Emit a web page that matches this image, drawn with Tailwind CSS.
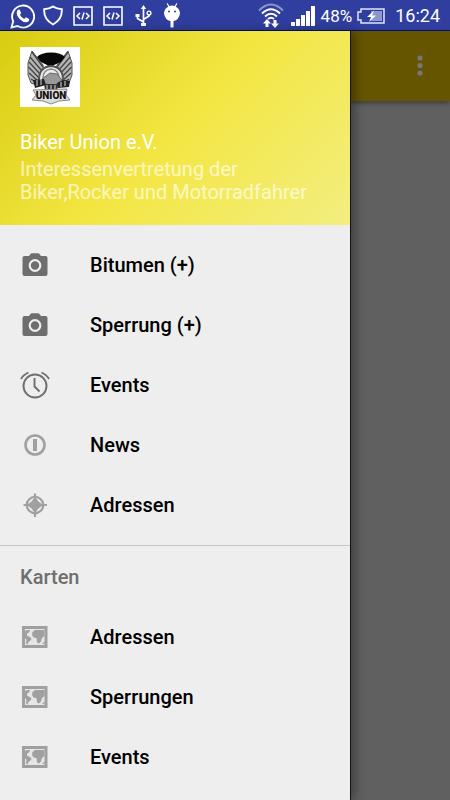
<!DOCTYPE html>
<html lang="de">
<head>
    <meta charset="UTF-8">
    <meta name="viewport" content="width=device-width, initial-scale=1.0">
    <title>Biker Union e.V.</title>
    <script src="https://cdn.jsdelivr.net/npm/@tailwindcss/browser@4"></script>
</head>
<body class="flex flex-col min-h-screen bg-[#606060] font-[Roboto,sans-serif]">
    <!-- Icons used more than once -->
    <svg class="hidden">
        <symbol id="code" viewBox="0 0 20 20">
            <path d="M1 1h18v18H1z" fill="none" stroke="#fff" stroke-width="1.6"/>
            <path d="M7 7l-3 3 3 3M13 7l3 3-3 3M11 6.500l-2 7" fill="none" stroke="#fff" stroke-width="1.500"/>
        </symbol>
        <symbol id="camera" viewBox="0 0 26 24">
            <path d="M2.500 3H7l1.500-2q.5-.7 1.300-.7h6.400q.8 0 1.300.7L19 3h4.500Q25.500 3 25.500 5v16q0 2-2 2h-21q-2 0-2-2V5q0-2 2-2z" fill="#6e6e6e"/>
            <circle cx="13" cy="12.500" r="5.300" fill="none" stroke="#eee" stroke-width="2.200"/>
        </symbol>
        <symbol id="map" viewBox="0 0 26 22">
            <path d="M1.500 1.500h22.500v19H1.500z" fill="#e6e6e6" stroke="#a0a0a0" stroke-width="3"/>
            <path d="M3 5q2-1.500 5-1l-1 2.500-2 1v2l3.500 2q1.500 1 .5 2.500L6.500 16 5.500 18.500 4 17.500 4.500 14 3 12z" fill="#a0a0a0"/>
            <path d="M10.500 6l2.500-2h9.500v6l-2.500 2-1 3.500-2 2-2-1-.5-4.500-3-.5-1.500-2.500zM20 17.500l2.500-2V18z" fill="#a0a0a0"/>
        </symbol>
    </svg>

    <!-- Status bar -->
    <header class="flex items-center justify-between h-[31px] pt-px pl-[10px] pr-[10px] bg-[#303f9f] border-b border-[#001070] text-white">
        <div class="flex items-center">
            <svg class="w-[25px] h-[26px]" viewBox="0 0 25 26">
                <path d="M1.500 24.500l1.700-6.200A11 11 0 1 1 7.500 23z" fill="none" stroke="#fff" stroke-width="1.900"/>
                <path d="M7.200 7.500q1.300-1.500 2.500-.8l1.400 3q0 1-1.200 2 1.500 3 4.300 4.200l1.600-1.700 3.400 1.700q.2 2.600-2.500 3.300-3 .6-6.800-3Q5.500 12 7.200 7.500z" fill="#fff"/>
            </svg>
            <svg class="w-[20px] h-[21px] ml-[8px]" viewBox="0 0 20 21">
                <path d="M10 1.500Q13.500 4 18.800 4.200 19.500 14.500 10 19.500.5 14.500 1.200 4.200 6.500 4 10 1.500z" fill="none" stroke="#fff" stroke-width="1.900"/>
            </svg>
            <svg class="size-[20px] ml-[10px]"><use href="#code"/></svg>
            <svg class="size-[20px] ml-[10px]"><use href="#code"/></svg>
            <svg class="w-[18px] h-[24px] ml-[11px]" viewBox="0 0 18 24" fill="none" stroke="#fff" stroke-width="1.700">
                <path d="M9.500 3v17M9.500 18l-6-3.500v-3M9.500 15.500l5.500-3.500V10"/>
                <circle cx="15" cy="9" r="1.900" stroke-width="1.400"/>
                <path d="M6.800 5l2.700-4 2.700 4zM1.500 10h4v3h-4zM7 19h5v3H7z" fill="#fff" stroke="none"/>
            </svg>
            <svg class="w-[18px] h-[25px] ml-[11px]" viewBox="0 0 18 25">
                <path d="M4.500 0l1.800 3q2.700-1 5.400 0l1.800-3 .8.500-1.500 3.200Q17 6 17 10.500 16 17 10.500 18v6.500h-3V18Q2 17 1 10.500 1 6 5.200 3.700L3.700.5z" fill="#fff"/>
                <circle cx="6" cy="8.500" r="1" fill="#303f9f"/><circle cx="12" cy="8.500" r="1" fill="#303f9f"/>
            </svg>
        </div>
        <div class="flex items-center">
            <svg class="w-[26px] h-[25px]" viewBox="0 0 26 25" fill="none" stroke="#fff" stroke-width="2">
                <path d="M1 7.500Q13-4.500 25 7.500" stroke-opacity=".45"/>
                <path d="M4 10.500q9-8.500 18 0M7 13.500q6-5.500 12 0M10 16q3-2.500 6 0"/>
                <path d="M9 16l4 4.500h-2.500V24h-3v-3.500H5zM17 25l4-4.500h-2.500V17h-3v3.500H13z" fill="#fff" stroke="none"/>
            </svg>
            <svg class="w-[24px] h-[20px] ml-[7px]" viewBox="0 0 24 20">
                <path d="M0 16h4v4H0zM5 13h4v7H5zM10 9h4v11h-4zM15 5h4v15h-4zM20 0h4v20h-4z" fill="#fff"/>
            </svg>
            <span class="ml-[6px] text-[17px] leading-6">48%</span>
            <svg class="w-[28px] h-[16px] ml-[5px]" viewBox="0 0 28 16">
                <path d="M4 1h23v14H4v-3H1V4h3z" fill="none" stroke="#dfe2f3" stroke-width="1.500"/>
                <path d="M14 3h11v10H14z" fill="#8d96cd"/>
                <path d="M17 2.500l-7 6.500h4l-2 5 7-6.500h-4z" fill="#fff"/>
            </svg>
            <time class="ml-[10px] text-[18px] leading-6">16:24</time>
        </div>
    </header>

    <div class="flex flex-1">
        <!-- Navigation drawer -->
        <aside class="w-[351px] shrink-0 bg-[#eee] border-r border-[#111] shadow-[4px_0_10px_rgba(0,0,0,0.35)] z-10">
            <div class="h-[194px] px-[20px] pt-[16px] text-[20px] leading-6 bg-linear-[135deg,#d8cc10,#f3e642_50%,#f3ee80]">
                <svg class="size-[60px]" viewBox="0 0 60 60" role="img" aria-label="Biker Union">
                    <path d="M0 0h60v60H0z" fill="#fff"/>
                    <!-- Wings -->
                    <path d="M12 4L8 16v12l3 8 8 3 5-8-1-13zM48 4l4 12v12l-3 8-8 3-5-8 1-13z" fill="#b4b4b4" stroke="#555"/>
                    <path d="M12 5l11 15M10 10l12 14M9 15l12 13M8.500 20L20 32M9 26l10 9M11 32l8 5M48 5L37 20M50 10L38 24M51 15L39 28M51.500 20L40 32M51 26l-10 9M49 32l-8 5" stroke="#444" stroke-width="1.300"/>
                    <!-- Head -->
                    <path d="M17 10Q21 5.500 31 5.500T45 10l-4 5-7 3-2 2h-3l-2-2-6-3z" fill="#080808"/>
                    <!-- Wheel and handshake -->
                    <path d="M19 33q0-13 12-14 12 1 12 14" fill="#eee" stroke="#555" stroke-width="2"/>
                    <path d="M23 31q0-8 8-9 8 1 8 9" fill="none" stroke="#888" stroke-width="1.500"/>
                    <path d="M22 32l8-6 7 1 5 6-7 5-11-1z" fill="#999" stroke="#666"/>
                    <path d="M13 33l11-1 2 6-11 3zM37 36l7-3 6 1-1 6-11 1z" fill="#222"/>
                    <path d="M17 33v6M21 32v6M41 35v5M45 34v5" stroke="#ddd"/>
                    <path d="M24 37h15l-2 6H25z" fill="#333"/>
                    <path d="M27 38v4M31 38v4M35 38v4" stroke="#ddd"/>
                    <!-- Banner -->
                    <path d="M13 43l34-1-1 6 4 5-11 1-8 3-8-3-11-1 4-5z" fill="#ddd" stroke="#888"/>
                    <text x="31" y="52" text-anchor="middle" font-family="Roboto, sans-serif" font-size="10" font-weight="900" fill="#111">UNION</text>
                </svg>
                <p class="mt-[23px] text-white">Biker Union e.V.</p>
                <p class="mt-[4px] leading-[23px] text-white/65">Interessenvertretung der<br>Biker,Rocker und Motorradfahrer</p>
            </div>

            <nav class="text-[20px] leading-6 font-medium text-black">
                <ul class="py-[10px]">
                    <li><a href="#" class="flex items-center h-[60px] pl-[20px] gap-[40px]">
                        <svg class="w-[30px] h-[24px]"><use href="#camera"/></svg>Bitumen (+)</a></li>
                    <li><a href="#" class="flex items-center h-[60px] pl-[20px] gap-[40px]">
                        <svg class="w-[30px] h-[24px]"><use href="#camera"/></svg>Sperrung (+)</a></li>
                    <li><a href="#" class="flex items-center h-[60px] pl-[20px] gap-[40px]">
                        <svg class="size-[30px]" viewBox="0 0 30 30" fill="none" stroke="#6e6e6e" stroke-width="1.900">
                            <circle cx="15" cy="16" r="11.500"/>
                            <path d="M14.500 8v8.500l5 5M1 9q2-4 7.500-6.500M29 9q-2-4-7.500-6.500"/>
                        </svg>Events</a></li>
                    <li><a href="#" class="flex items-center h-[60px] pl-[20px] gap-[40px]">
                        <svg class="size-[30px]" viewBox="0 0 30 30" fill="none" stroke="#a0a0a0">
                            <circle cx="15" cy="15" r="9.500" stroke-width="2.600"/>
                            <path d="M15 9v12" stroke-width="4"/>
                        </svg>News</a></li>
                    <li><a href="#" class="flex items-center h-[60px] pl-[20px] gap-[40px]">
                        <svg class="size-[30px]" viewBox="0 0 30 30" fill="none" stroke="#a0a0a0" stroke-width="2.200">
                            <circle cx="15" cy="15" r="8.200"/>
                            <path d="M15 3.500V27M3.500 15H27"/>
                            <path d="M15 7l3.500 4.500L23 15l-4.500 3.500L15 23l-3.500-4.500L7 15l4.500-3.500z" fill="#a0a0a0" stroke="none"/>
                        </svg>Adressen</a></li>
                </ul>
                <h2 class="h-[62px] pl-[20px] border-t border-[#c4c8c4] leading-[62px] text-[#6e6e6e]">Karten</h2>
                <ul class="pb-[10px]">
                    <li><a href="#" class="flex items-center h-[60px] pl-[20px] gap-[40px]">
                        <svg class="w-[30px] h-[22px]"><use href="#map"/></svg>Adressen</a></li>
                    <li><a href="#" class="flex items-center h-[60px] pl-[20px] gap-[40px]">
                        <svg class="w-[30px] h-[22px]"><use href="#map"/></svg>Sperrungen</a></li>
                    <li><a href="#" class="flex items-center h-[60px] pl-[20px] gap-[40px]">
                        <svg class="w-[30px] h-[22px]"><use href="#map"/></svg>Events</a></li>
                </ul>
            </nav>
        </aside>

        <!-- Dimmed page behind the drawer -->
        <main class="flex-1">
            <div class="flex items-center justify-end h-[70px] pr-[20px] bg-[#665500] shadow-[0_2px_5px_rgba(0,0,0,0.4)]">
                <button aria-label="Mehr" class="w-[20px] h-[24px]">
                    <svg class="w-[20px] h-[24px]" viewBox="0 0 20 24" fill="#777">
                        <circle cx="10" cy="4" r="2.600"/><circle cx="10" cy="11.500" r="2.600"/><circle cx="10" cy="19" r="2.600"/>
                    </svg>
                </button>
            </div>
        </main>
    </div>
</body>
</html>
